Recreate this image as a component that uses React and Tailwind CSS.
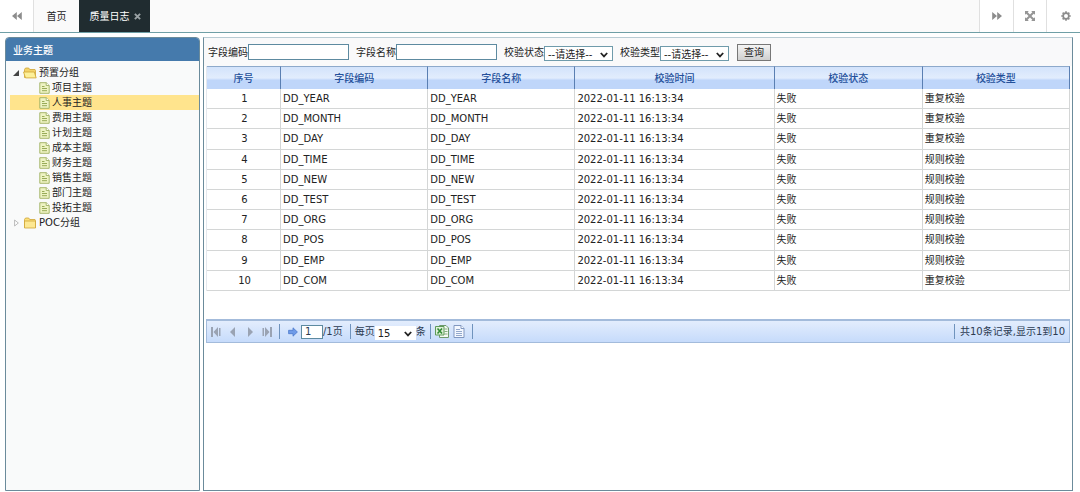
import { useState } from "react"

const topics = ["项目主题", "人事主题", "费用主题", "计划主题", "成本主题", "财务主题", "销售主题", "部门主题", "投拓主题"];

const time = "2022-01-11 16:13:34";

const logs = [
  { id: 1, code: "DD_YEAR", type: "重复校验" },
  { id: 2, code: "DD_MONTH", type: "重复校验" },
  { id: 3, code: "DD_DAY", type: "重复校验" },
  { id: 4, code: "DD_TIME", type: "规则校验" },
  { id: 5, code: "DD_NEW", type: "规则校验" },
  { id: 6, code: "DD_TEST", type: "规则校验" },
  { id: 7, code: "DD_ORG", type: "规则校验" },
  { id: 8, code: "DD_POS", type: "规则校验" },
  { id: 9, code: "DD_EMP", type: "规则校验" },
  { id: 10, code: "DD_COM", type: "重复校验" },
];

const columns = [
  { title: "序号", width: "w-[74px]" },
  { title: "字段编码", width: "w-[147px]" },
  { title: "字段名称", width: "w-[147px]" },
  { title: "校验时间", width: "w-[199px]" },
  { title: "校验状态", width: "w-[148px]" },
  { title: "校验类型", width: "w-[147px]" },
];

function DoubleChevron({ flip }) {
  return (
    <svg viewBox="0 0 10 8" className={flip ? "w-[10px] h-2 rotate-180" : "w-[10px] h-2"} fill="#8c8c8c">
      <path d="M4.800 0v8L0 4zM9.800 0v8L5 4z" />
    </svg>
  )
}

function ExpandIcon() {
  return (
    <svg viewBox="0 0 10 10" className="w-[10px] h-[10px]" fill="#959595">
      <path d="M0 0h3.800L2.700 1.200 5 3.600l2.300-2.400L6.200 0H10v3.800L8.800 2.700 6.400 5l2.400 2.300L10 6.200V10H6.200l1.100-1.200L5 6.400 2.700 8.800 3.800 10H0V6.200l1.200 1.100L3.600 5 1.200 2.700 0 3.800z" />
    </svg>
  )
}

function GearIcon() {
  return (
    <svg viewBox="0 0 12 12" className="w-[10px] h-[10px]" fill="none" stroke="#8c8c8c">
      <circle cx="6" cy="6" r="3.400" strokeWidth="2" />
      <path d="M6 .3v2M6 9.700v2M.3 6h2M9.700 6h2M2 2l1.400 1.400M8.600 8.600L10 10M2 10l1.400-1.400M8.600 3.400L10 2" strokeWidth="2" />
    </svg>
  )
}

function FolderIcon({ open }) {
  return (
    <svg viewBox="0 0 14 12" className="w-[14px] h-3 shrink-0" stroke="#cfa436" strokeWidth=".8" strokeLinejoin="round">
      <path d="M1.500 10.500V2.500l1-1.500h3.200l1 1.500H12l.5 1v7z" fill={open ? "#f3d36a" : "#fbdf7c"} />
      {open ? (
        <path d="M.5 5h10.800l1.900 5.900H2.500z" fill="#fdf09a" />
      ) : (
        <path d="M1.500 4h11v7h-11z" fill="#fde893" />
      )}
    </svg>
  )
}

function LeafIcon() {
  return (
    <svg viewBox="0 0 11 12" className="w-[11px] h-3 shrink-0" strokeWidth=".9">
      <path d="M.8.7h6.400l3 2.800v7.800H.8z" fill="#eef3c4" stroke="#9fb060" />
      <path d="M7.200.7v2.800h3" fill="#fff" stroke="#9fb060" />
      <path d="M3 4.500h2.500M3 6.500h5M3 8.700h5" stroke="#8da34b" />
    </svg>
  )
}

function PageIcon({ kind }) {
  return (
    <svg viewBox="0 0 10 10" className="w-[10px] h-[10px]" fill="#9aa3b3">
      {kind === "first" && <path d="M0 0h2v10H0zM7 0v10L2.500 5zM8 1h1.500v8H8z" />}
      {kind === "prev" && <path d="M7 0v10L2 5z" />}
      {kind === "next" && <path d="M3 0v10l5-5z" />}
      {kind === "last" && <path d="M8 0h2v10H8zM3 0v10l4.500-5zM.5 1H2v8H.5z" />}
    </svg>
  )
}

function ExcelIcon() {
  return (
    <svg viewBox="0 0 14 13" className="w-[14px] h-[13px]">
      <path d="M4.500.5h6.500l2.500 2.500v9.500h-9z" fill="#f5faf3" stroke="#6f9a6d" />
      <path d="M9.500 4h3M9.500 6.500h3M9.500 9h3" stroke="#85b07f" />
      <path d="M.5 1.500h8.500v8.500H.5z" fill="#dff0d8" stroke="#5d9a5a" />
      <path d="M2.500 3.500l4.500 5M7 3.500l-4.500 5" stroke="#2f8a32" strokeWidth="1.600" />
    </svg>
  )
}

function DocIcon() {
  return (
    <svg viewBox="0 0 12 13" className="w-3 h-[13px]">
      <path d="M1 .5h7l3 3v9H1z" fill="#f4f8ff" stroke="#8097c0" />
      <path d="M8 .5v3h3" fill="#fff" stroke="#8097c0" />
      <path d="M3 4.500h4M3 6.500h6M3 8.500h6M3 10.500h6" stroke="#93a8cc" />
    </svg>
  )
}

function Picker({ id, options, className }) {
  return (
    <span className={`grid items-center ${className}`}>
      <select id={id} className="col-start-1 row-start-1 w-full h-full appearance-none bg-transparent pl-[3px] text-[#222]">
        {options.map((o) => (
          <option key={o}>{o}</option>
        ))}
      </select>
      <svg viewBox="0 0 8 6" className="col-start-1 row-start-1 justify-self-end mr-1 w-2 h-[6px] pointer-events-none" fill="none" stroke="#222" strokeWidth="1.800">
        <path d="M.8 1L4 4.400 7.200 1" />
      </svg>
    </span>
  )
}

function Divider() {
  return <span className="w-px h-[15px] bg-[#6f93bd]" />
}

function App() {
  const [selected, setSelected] = useState("人事主题");
  const [code, setCode] = useState("");
  const [name, setName] = useState("");
  const [page, setPage] = useState("1");

  return (
    <div className="h-screen flex flex-col bg-white text-[10px] leading-[15px] text-[#222] font-['DejaVu_Sans','Noto_Sans_CJK_SC',sans-serif]">
      <header className="flex h-[33px] shrink-0 bg-[#fafafa] border-b border-[#6f9fa6]">
        <button aria-label="向左滚动" className="w-[34px] flex items-center justify-center bg-white border-r border-[#e0e0e0]">
          <DoubleChevron />
        </button>
        <button className="w-[45px] text-center">首页</button>
        <div className="w-[71px] flex items-center justify-center gap-1 pl-px bg-[#202c30] text-white">
          <button>质量日志</button>
          <button aria-label="关闭">
            <svg viewBox="0 0 8 8" className="w-[7px] h-[7px]" stroke="#9aa2a5" strokeWidth="2.200">
              <path d="M1 1l6 6M7 1L1 7" />
            </svg>
          </button>
        </div>
        <div className="ml-auto flex bg-white">
          <button aria-label="向右滚动" className="w-[34px] flex items-center justify-center border-l border-[#e0e0e0]">
            <DoubleChevron flip />
          </button>
          <button aria-label="全屏" className="w-[33px] flex items-center justify-center border-l border-[#e0e0e0]">
            <ExpandIcon />
          </button>
          <button aria-label="设置" className="w-[34px] flex items-center justify-center pl-1 border-l border-[#e0e0e0]">
            <GearIcon />
          </button>
        </div>
      </header>

      <div className="flex flex-1 min-h-0 gap-[3px] pt-1 pl-[5px] pr-[7px] pb-px">
        <aside className="w-[195px] shrink-0 flex flex-col rounded-t border border-[#6b8b9b] bg-[#f9fafa]">
          <h2 className="h-[23px] shrink-0 pt-[5px] pl-[7px] rounded-t-[3px] bg-[#457aac] text-white font-medium">业务主题</h2>
          <ul className="pt-1 pl-1">
            <li>
              <button className="flex items-center h-[15px] pl-[3px]">
                <svg viewBox="0 0 6 6" className="w-[6px] h-[6px] mr-1" fill="#444">
                  <path d="M6 0v6H0z" />
                </svg>
                <FolderIcon open />
                <span className="ml-[2px]">预置分组</span>
              </button>
              <ul>
                {topics.map((t) => (
                  <li key={t}>
                    <button
                      onClick={() => setSelected(t)}
                      className={selected === t ? "flex items-center w-full h-[15px] pl-[29px] bg-[#ffe48d]" : "flex items-center w-full h-[15px] pl-[29px]"}
                    >
                      <LeafIcon />
                      <span className="ml-[2px]">{t}</span>
                    </button>
                  </li>
                ))}
              </ul>
            </li>
            <li>
              <button className="flex items-center h-[15px] pl-1">
                <svg viewBox="0 0 5 8" className="w-[5px] h-2 mr-1" fill="#fff" stroke="#aaa" strokeWidth=".8">
                  <path d="M.6 1L4.300 4 .6 7z" />
                </svg>
                <FolderIcon />
                <span className="ml-[2px]">POC分组</span>
              </button>
            </li>
          </ul>
        </aside>

        <main className="flex-1 min-w-0 flex flex-col border border-[#6b8b9b] border-t-[#b9ccd4]">
          <form className="flex items-center h-7 shrink-0 pl-1 bg-[#f9f9fa]" onSubmit={(e) => e.preventDefault()}>
            <label htmlFor="code">字段编码</label>
            <input id="code" value={code} onChange={(e) => setCode(e.target.value)} className="w-[101px] h-4 mr-[7px] px-1 border border-[#5d8aa0] bg-white" />
            <label htmlFor="name">字段名称</label>
            <input id="name" value={name} onChange={(e) => setName(e.target.value)} className="w-[101px] h-4 mr-[7px] px-1 border border-[#5d8aa0] bg-white" />
            <label htmlFor="status">校验状态</label>
            <Picker id="status" options={["--请选择--", "成功", "失败"]} className="w-[69px] h-[15px] mt-[3px] mr-[7px] border border-[#6f9bab] bg-white" />
            <label htmlFor="type">校验类型</label>
            <Picker id="type" options={["--请选择--", "重复校验", "规则校验"]} className="w-[69px] h-[15px] mt-[3px] mr-2 border border-[#6f9bab] bg-white" />
            <button type="submit" className="w-[34px] h-[17px] border border-[#777] bg-linear-to-b from-[#f4f4f4] to-[#cfcfcf]">查询</button>
          </form>

          <div className="pl-[2px] pr-[2px]">
            <table className="w-full h-[225px] table-fixed border-separate border-spacing-0 border-l border-[#e4e8ee]">
              <thead>
                <tr>
                  {columns.map((c) => (
                    <th key={c.title} className={`${c.width} h-[23px] p-0 pt-px border-t border-r border-t-[#8da9cb] border-r-[#5a7fb2] bg-linear-to-b from-[#d3e3fb] via-[#e2edfd] via-50% to-[#bfd6fa] to-60% text-[#24509a] font-medium`}>
                      {c.title}
                    </th>
                  ))}
                </tr>
              </thead>
              <tbody>
                {logs.map((l) => (
                  <tr key={l.id} className="h-5 [&>td]:p-0 [&>td]:pl-[2px] [&>td]:border-r [&>td]:border-b [&>td]:border-[#d4d6d6] [&>td]:leading-[15px]">
                    <td className="text-center">{l.id}</td>
                    <td>{l.code}</td>
                    <td>{l.code}</td>
                    <td>{time}</td>
                    <td>失败</td>
                    <td>{l.type}</td>
                  </tr>
                ))}
              </tbody>
            </table>

            <div className="flex items-center h-6 mt-7 pl-1 pr-1 border border-[#a3bbdb] border-t-2 bg-linear-to-b from-[#e3edfd] to-[#c6dbfb] text-[#2c3b52]">
              <div className="flex gap-[7px]">
                <button aria-label="首页"><PageIcon kind="first" /></button>
                <button aria-label="上一页"><PageIcon kind="prev" /></button>
                <button aria-label="下一页"><PageIcon kind="next" /></button>
                <button aria-label="末页" className="mr-[7px]"><PageIcon kind="last" /></button>
              </div>
              <Divider />
              <button aria-label="跳转" className="ml-2 mr-[3px]">
                <svg viewBox="0 0 10 10" className="w-[10px] h-[10px]" fill="#6f9be8" stroke="#4b78cc" strokeWidth=".8">
                  <path d="M.6 3.300h4.400V.8L9.400 5 5 9.200V6.700H.6z" />
                </svg>
              </button>
              <input aria-label="页码" value={page} onChange={(e) => setPage(e.target.value)} className="w-[22px] h-[14px] pl-[3px] border border-[#5d8aa0] bg-white" />
              <span className="mr-[7px]">/1页</span>
              <Divider />
              <label htmlFor="size" className="ml-1">每页</label>
              <Picker id="size" options={["15", "30", "50"]} className="w-[41px] h-[14px] mt-[3px] bg-white" />
              <span className="mr-1">条</span>
              <Divider />
              <button aria-label="导出Excel" className="ml-1 mr-1"><ExcelIcon /></button>
              <button aria-label="导出文本" className="mr-[7px]"><DocIcon /></button>
              <Divider />
              <span className="ml-auto flex items-center gap-[5px]">
                <Divider />
                共10条记录,显示1到10
              </span>
            </div>
          </div>
        </main>
      </div>
    </div>
  )
}

export default App
